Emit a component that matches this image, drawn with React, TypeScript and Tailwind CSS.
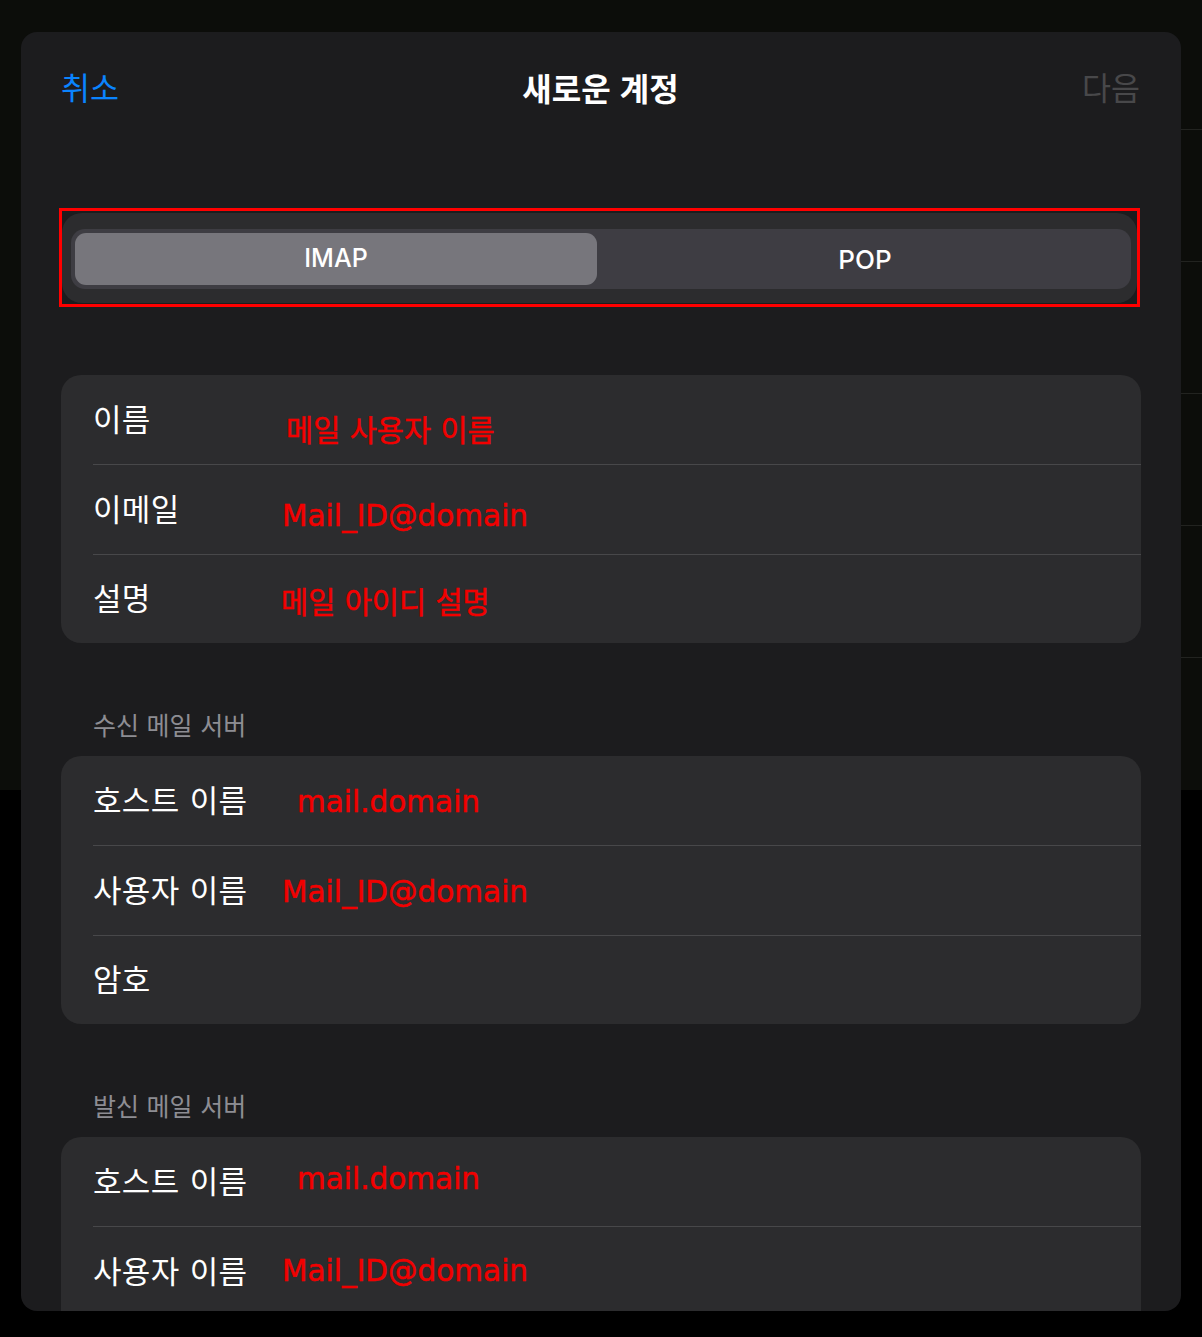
import React from "react";

type Row = {
  label: string;
  value?: string;
  nudge?: string;
};

const accountRows: Row[] = [
  { label: "이름", value: "메일 사용자 이름", nudge: "ml-[4px] mt-[25px]" },
  { label: "이메일", value: "Mail_ID@domain", nudge: "ml-[0px] mt-[15px]" },
  { label: "설명", value: "메일 아이디 설명", nudge: "-ml-[1px] mt-[10px]" },
];

const incomingRows: Row[] = [
  { label: "호스트 이름", value: "mail.domain", nudge: "ml-[15px] mt-[5px]" },
  { label: "사용자 이름", value: "Mail_ID@domain", nudge: "ml-[0px] mt-[4px]" },
  { label: "암호" },
];

const outgoingRows: Row[] = [
  { label: "호스트 이름", value: "mail.domain", nudge: "ml-[15px] -mt-[3px]" },
  { label: "사용자 이름", value: "Mail_ID@domain", nudge: "ml-[0px] mt-0" },
];

const korean = "font-['Noto_Sans_CJK_KR','Noto_Sans',sans-serif]";

const Group = ({ rows, className = "" }: { rows: Row[]; className?: string }) => (
  <div className={`ml-[40px] w-[1080px] rounded-[20px] bg-[#2c2c2e] ${className}`}>
    {rows.map((row, i) => (
      <div key={row.label + i}>
        {i > 0 && <div className="ml-[32px] h-px bg-[#48484a]" />}
        <div className={`flex items-center pl-[32px] ${i === 2 ? "h-[88px]" : "h-[89px]"}`}>
          <span
            className={`w-[189px] shrink-0 -mt-[5px] text-[31px] leading-none tracking-[0.3px] [word-spacing:3px] text-white ${korean}`}
          >
            {row.label}
          </span>
          {row.value && (
            <span
              className={`text-[29.5px] leading-none text-[#f20000] [-webkit-text-stroke:0.5px_#f20000] font-['DejaVu_Sans','Noto_Sans_CJK_KR',sans-serif] ${row.nudge}`}
            >
              {row.value}
            </span>
          )}
        </div>
      </div>
    ))}
  </div>
);

const SectionTitle = ({ children }: { children: React.ReactNode }) => (
  <div
    className={`mt-[67px] mb-[16px] h-[30px] pl-[72px] text-[25px] leading-[28px] [word-spacing:2px] text-[#8d8d93] ${korean}`}
  >
    {children}
  </div>
);

export default function App() {
  return (
    <div className="relative h-[1337px] w-full overflow-hidden bg-black">
      {/* settings list behind the sheet */}
      <div className="absolute inset-0 flex flex-col">
        <div className="h-[790px] bg-[#0c0d0a] pl-[300px]">
          <div className="h-[130px] border-b border-[#222320]" />
          <div className="h-[132px] border-b border-[#222320]" />
          <div className="h-[132px] border-b border-[#222320]" />
          <div className="h-[132px] border-b border-[#222320]" />
          <div className="h-[132px] border-b border-[#222320]" />
        </div>
        <div className="flex-1 bg-black" />
      </div>

      <div className="relative pl-[21px] pt-[32px]">
        <div className="h-[1279px] w-[1160px] overflow-hidden rounded-[16px] bg-[#1c1c1e]">
          {/* nav bar */}
          <div className={`grid h-[110px] grid-cols-3 items-center pl-[40px] pr-[41px] text-[31.5px] leading-none ${korean}`}>
            <span className="text-[#0a84ff]">취소</span>
            <span className="text-center text-[32px] font-semibold text-white [word-spacing:2px]">새로운 계정</span>
            <span className="text-right text-[#48484a]">다음</span>
          </div>

          {/* segmented control, outlined in red */}
          <div className="ml-[38px] mt-[66px] h-[99px] w-[1081px] border-[3px] border-[#ff0000]">
            <div className="mt-[2px] flex h-[90px] items-center rounded-[20px] bg-[#2c2c2e] pl-[9px] pr-[6px]">
              <div className="mt-[2px] flex h-[60px] w-full rounded-[14px] bg-[#3e3d43] p-[4px] font-['Inter',sans-serif] text-[25px] font-medium text-white">
                <div className="flex w-[522px] items-center justify-center rounded-[11px] bg-[#77767c]">IMAP</div>
                <div className="flex flex-1 items-center justify-center pl-[6px] text-[26px]">POP</div>
              </div>
            </div>
          </div>

          <Group rows={accountRows} className="mt-[68px]" />

          <SectionTitle>수신 메일 서버</SectionTitle>
          <Group rows={incomingRows} />

          <SectionTitle>발신 메일 서버</SectionTitle>
          <Group rows={outgoingRows} className="rounded-b-none" />
        </div>
      </div>
    </div>
  );
}
